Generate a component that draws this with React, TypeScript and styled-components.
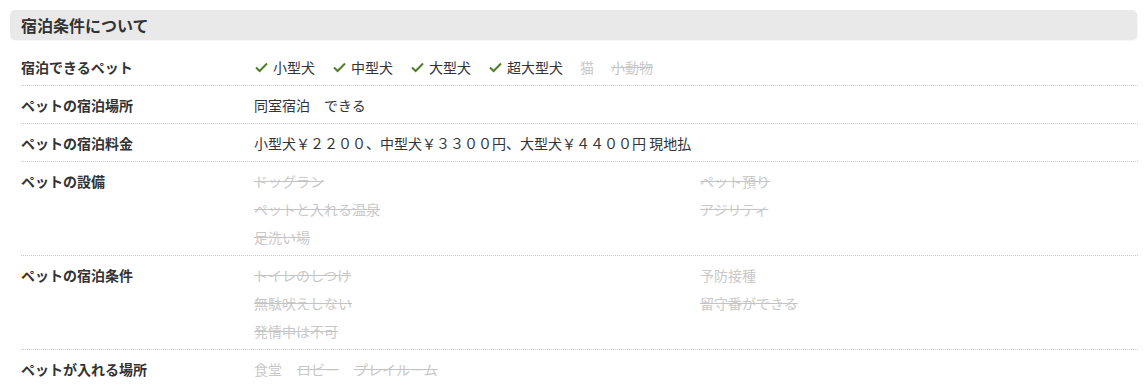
import React from "react";
import styled, { createGlobalStyle } from "styled-components";

const Global = createGlobalStyle`
  html, body { margin: 0; padding: 0; background: #fff; }
  body {
    font-family: "Noto Sans CJK JP", "Noto Sans", sans-serif;
    color: #333;
  }
`;

const Page = styled.div`
  padding: 10px 10px 0 10px;
  width: 1127px;
`;

const Header = styled.div`
  height: 30px;
  background: #e9e9e9;
  border-radius: 5px;
  display: flex;
  align-items: center;
  padding-left: 11px;
  font-size: 16px;
  font-weight: bold;
  color: #333;
  box-shadow: 1px 1px 1px rgba(0, 0, 0, 0.04);
`;

const Table = styled.div`
  margin-top: 8px;
  margin-left: 11px;
  width: 1117px;
`;

const Row = styled.div<{ $last?: boolean }>`
  display: grid;
  grid-template-columns: 233px 1fr;
  padding: 10px 0 9px 0;
  border-bottom: ${(p) => (p.$last ? "none" : "1px dotted #c8c8c8")};
  font-size: 14px;
  line-height: 18px;
`;

const Label = styled.div`
  font-weight: bold;
  color: #333;
`;

const Inline = styled.div<{ $gap: number }>`
  display: flex;
  align-items: center;
  gap: ${(p) => p.$gap}px;
`;

const Grid2 = styled.div`
  display: grid;
  grid-template-columns: 446px 1fr;
  row-gap: 10px;
`;

const Item = styled.span<{ $off?: boolean; $strike?: boolean }>`
  display: inline-flex;
  align-items: center;
  color: ${(p) => (p.$off ? "#c9c9c9" : "#333")};
  text-decoration: ${(p) => (p.$strike ? "line-through" : "none")};
  text-decoration-color: #c4c4c4;
  white-space: pre;
`;

const Check = styled.svg`
  width: 13px;
  height: 11px;
  margin-left: 1px;
  margin-right: 5px;
  flex: none;
`;

const CheckIcon = () => (
  <Check viewBox="0 0 13 11">
    <polyline
      points="1,5.5 4.6,9 12,1.5"
      fill="none"
      stroke="#4f7f2c"
      strokeWidth="2"
      strokeLinecap="butt"
    />
  </Check>
);

type Entry = { t: string; off?: boolean; strike?: boolean };

const pets: (Entry & { ok?: boolean })[] = [
  { t: "小型犬", ok: true },
  { t: "中型犬", ok: true },
  { t: "大型犬", ok: true },
  { t: "超大型犬", ok: true },
  { t: "猫", off: true },
  { t: "小動物", off: true, strike: true },
];

const facilities: Entry[] = [
  { t: "ドッグラン", off: true, strike: true },
  { t: "ペット預り", off: true, strike: true },
  { t: "ペットと入れる温泉", off: true, strike: true },
  { t: "アジリティ", off: true, strike: true },
  { t: "足洗い場", off: true, strike: true },
];

const conditions: Entry[] = [
  { t: "トイレのしつけ", off: true, strike: true },
  { t: "予防接種", off: true },
  { t: "無駄吠えしない", off: true, strike: true },
  { t: "留守番ができる", off: true, strike: true },
  { t: "発情中は不可", off: true, strike: true },
];

const places: Entry[] = [
  { t: "食堂", off: true },
  { t: "ロビー", off: true, strike: true },
  { t: "プレイルーム", off: true, strike: true },
];

const renderGrid = (list: Entry[]) => (
  <Grid2>
    {list.map((e) => (
      <div key={e.t}>
        <Item $off={e.off} $strike={e.strike}>
          {e.t}
        </Item>
      </div>
    ))}
  </Grid2>
);

export default function App() {
  return (
    <>
      <Global />
      <Page>
        <Header>宿泊条件について</Header>
        <Table>
          <Row>
            <Label>宿泊できるペット</Label>
            <Inline $gap={17}>
              {pets.map((p) => (
                <Item key={p.t} $off={p.off} $strike={p.strike}>
                  {p.ok && <CheckIcon />}
                  {p.t}
                </Item>
              ))}
            </Inline>
          </Row>
          <Row>
            <Label>ペットの宿泊場所</Label>
            <div>
              <Item>同室宿泊　できる</Item>
            </div>
          </Row>
          <Row>
            <Label>ペットの宿泊料金</Label>
            <div>
              <Item>小型犬￥２２００、中型犬￥３３００円、大型犬￥４４００円 現地払</Item>
            </div>
          </Row>
          <Row>
            <Label>ペットの設備</Label>
            {renderGrid(facilities)}
          </Row>
          <Row>
            <Label>ペットの宿泊条件</Label>
            {renderGrid(conditions)}
          </Row>
          <Row $last>
            <Label>ペットが入れる場所</Label>
            <Inline $gap={15}>
              {places.map((p) => (
                <Item key={p.t} $off={p.off} $strike={p.strike}>
                  {p.t}
                </Item>
              ))}
            </Inline>
          </Row>
        </Table>
      </Page>
    </>
  );
}
